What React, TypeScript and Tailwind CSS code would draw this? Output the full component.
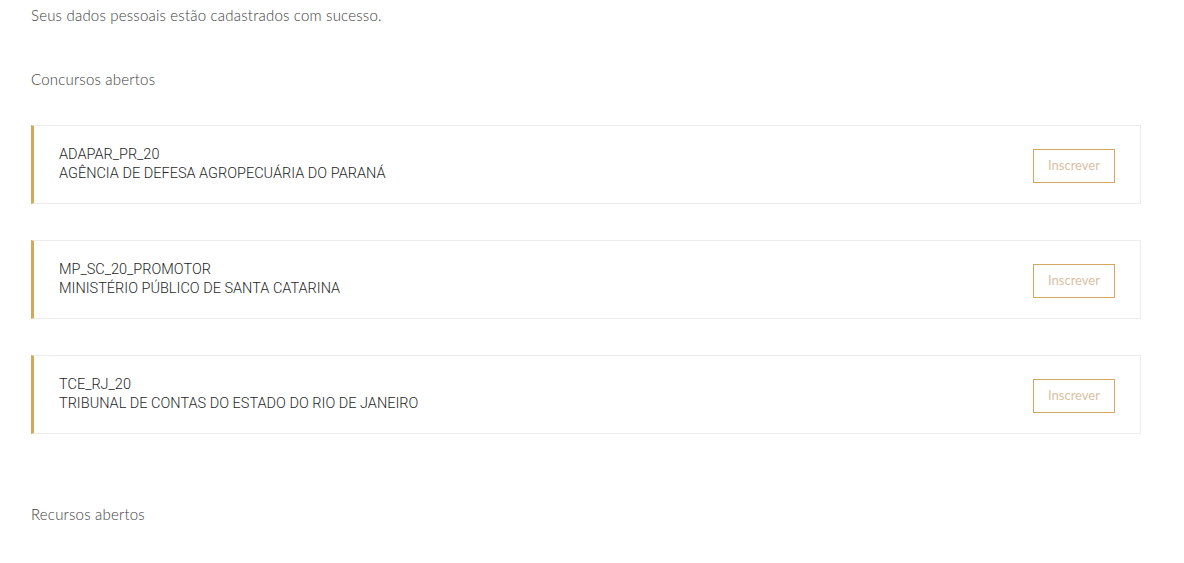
const concursos = [
  { code: "ADAPAR_PR_20", name: "AGÊNCIA DE DEFESA AGROPECUÁRIA DO PARANÁ" },
  { code: "MP_SC_20_PROMOTOR", name: "MINISTÉRIO PÚBLICO DE SANTA CATARINA" },
  { code: "TCE_RJ_20", name: "TRIBUNAL DE CONTAS DO ESTADO DO RIO DE JANEIRO" },
];

export default function App() {
  return (
    <div className="min-h-screen bg-white font-['Lato',sans-serif] text-[#3d3d3d] font-light">
      <div className="w-[1110px] ml-[31px] pt-[6px]">
        <p className="text-[15px] leading-[18px] tracking-[0.2px]">
          Seus dados pessoais estão cadastrados com sucesso.
        </p>

        <h2 className="mt-[46px] text-[15px] leading-[18px] tracking-[0.2px]">Concursos abertos</h2>

        <div className="mt-[37px] flex flex-col gap-[36px]">
          {concursos.map((c) => (
            <div
              key={c.code}
              className="h-[79px] flex items-center justify-between border border-[#ececec] border-l-[3px] border-l-[#d4a857] pl-[25px] pr-[25px]"
            >
              <div className="pb-[2px] font-['Roboto',sans-serif] font-light text-[14.5px] leading-[19px] text-[#1f1f1f]">
                <div>{c.code}</div>
                <div>{c.name}</div>
              </div>
              <button className="mt-[3px] w-[82px] h-[34px] border border-[#d1a85f] text-[13px] text-[#dcc0a4] font-normal">
                Inscrever
              </button>
            </div>
          ))}
        </div>

        <h2 className="mt-[71px] text-[15px] leading-[18px] tracking-[0.2px]">Recursos abertos</h2>
      </div>
    </div>
  );
}
